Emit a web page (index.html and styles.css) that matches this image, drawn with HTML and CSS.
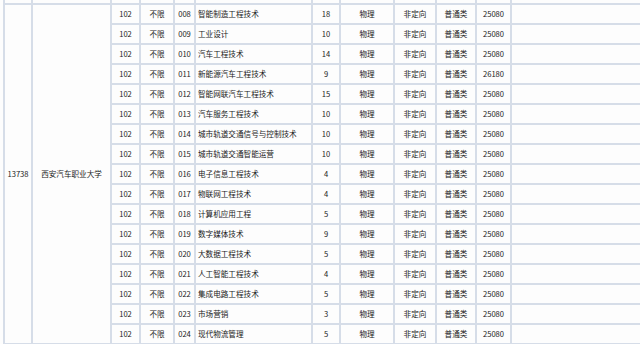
FILE: index.html
```html
<!DOCTYPE html>
<html lang="zh-CN">
<head>
<meta charset="utf-8">
<title>专业计划表</title>
<link rel="stylesheet" href="styles.css">
</head>
<body>
<div class="sheet">
<table class="plan">
<colgroup>
<col class="c-code"><col class="c-school"><col class="c-group"><col class="c-limit"><col class="c-no"><col class="c-major"><col class="c-num"><col class="c-subj"><col class="c-dir"><col class="c-type"><col class="c-fee"><col class="c-rest">
</colgroup>
<tbody>
<tr class="prev"><td></td><td></td><td></td><td></td><td></td><td></td><td></td><td></td><td></td><td></td><td></td><td></td></tr>
<tr><td class="ctr" rowspan="17">13738</td><td class="ctr" rowspan="17">西安汽车职业大学</td><td>102</td><td>不限</td><td>008</td><td class="name">智能制造工程技术</td><td>18</td><td>物理</td><td>非定向</td><td>普通类</td><td>25080</td><td></td></tr>
<tr><td>102</td><td>不限</td><td>009</td><td class="name">工业设计</td><td>10</td><td>物理</td><td>非定向</td><td>普通类</td><td>25080</td><td></td></tr>
<tr><td>102</td><td>不限</td><td>010</td><td class="name">汽车工程技术</td><td>14</td><td>物理</td><td>非定向</td><td>普通类</td><td>25080</td><td></td></tr>
<tr><td>102</td><td>不限</td><td>011</td><td class="name">新能源汽车工程技术</td><td>9</td><td>物理</td><td>非定向</td><td>普通类</td><td>26180</td><td></td></tr>
<tr><td>102</td><td>不限</td><td>012</td><td class="name">智能网联汽车工程技术</td><td>15</td><td>物理</td><td>非定向</td><td>普通类</td><td>25080</td><td></td></tr>
<tr><td>102</td><td>不限</td><td>013</td><td class="name">汽车服务工程技术</td><td>10</td><td>物理</td><td>非定向</td><td>普通类</td><td>25080</td><td></td></tr>
<tr><td>102</td><td>不限</td><td>014</td><td class="name">城市轨道交通信号与控制技术</td><td>10</td><td>物理</td><td>非定向</td><td>普通类</td><td>25080</td><td></td></tr>
<tr><td>102</td><td>不限</td><td>015</td><td class="name">城市轨道交通智能运营</td><td>10</td><td>物理</td><td>非定向</td><td>普通类</td><td>25080</td><td></td></tr>
<tr><td>102</td><td>不限</td><td>016</td><td class="name">电子信息工程技术</td><td>4</td><td>物理</td><td>非定向</td><td>普通类</td><td>25080</td><td></td></tr>
<tr><td>102</td><td>不限</td><td>017</td><td class="name">物联网工程技术</td><td>4</td><td>物理</td><td>非定向</td><td>普通类</td><td>25080</td><td></td></tr>
<tr><td>102</td><td>不限</td><td>018</td><td class="name">计算机应用工程</td><td>5</td><td>物理</td><td>非定向</td><td>普通类</td><td>25080</td><td></td></tr>
<tr><td>102</td><td>不限</td><td>019</td><td class="name">数字媒体技术</td><td>9</td><td>物理</td><td>非定向</td><td>普通类</td><td>25080</td><td></td></tr>
<tr><td>102</td><td>不限</td><td>020</td><td class="name">大数据工程技术</td><td>5</td><td>物理</td><td>非定向</td><td>普通类</td><td>25080</td><td></td></tr>
<tr><td>102</td><td>不限</td><td>021</td><td class="name">人工智能工程技术</td><td>4</td><td>物理</td><td>非定向</td><td>普通类</td><td>25080</td><td></td></tr>
<tr><td>102</td><td>不限</td><td>022</td><td class="name">集成电路工程技术</td><td>5</td><td>物理</td><td>非定向</td><td>普通类</td><td>25080</td><td></td></tr>
<tr><td>102</td><td>不限</td><td>023</td><td class="name">市场营销</td><td>3</td><td>物理</td><td>非定向</td><td>普通类</td><td>25080</td><td></td></tr>
<tr><td>102</td><td>不限</td><td>024</td><td class="name">现代物流管理</td><td>5</td><td>物理</td><td>非定向</td><td>普通类</td><td>25080</td><td></td></tr>
</tbody>
</table>
</div>
</body>
</html>
```
FILE: styles.css
```css
html, body {
  margin: 0;
  padding: 0;
  background: #fdfdfd;
}

.sheet {
  width: 640px;
  height: 344px;
  overflow: hidden;
  background: #fdfdfd;
}

.plan {
  border-collapse: collapse;
  table-layout: fixed;
  width: 707px;
  margin-top: -17px;
  margin-left: 3px;
  font-family: "Noto Sans CJK SC", "Noto Sans", sans-serif;
  font-size: 7.6px;
  color: #1a1a1a;
}

.plan td {
  border: 2px solid #d6dde8;
  height: 18px;
  padding: 0;
  text-align: center;
  vertical-align: middle;
  white-space: nowrap;
  overflow: hidden;
  line-height: 1;
}

.plan td.name {
  text-align: left;
  padding-left: 2px;
}

.c-code { width: 28px; }
.c-school { width: 79px; }
.c-group { width: 29px; }
.c-limit { width: 34px; }
.c-no { width: 21px; }
.c-major { width: 117px; }
.c-num { width: 28px; }
.c-subj { width: 54px; }
.c-dir { width: 42px; }
.c-type { width: 40px; }
.c-fee { width: 35px; }
.c-rest { width: 200px; }
```
